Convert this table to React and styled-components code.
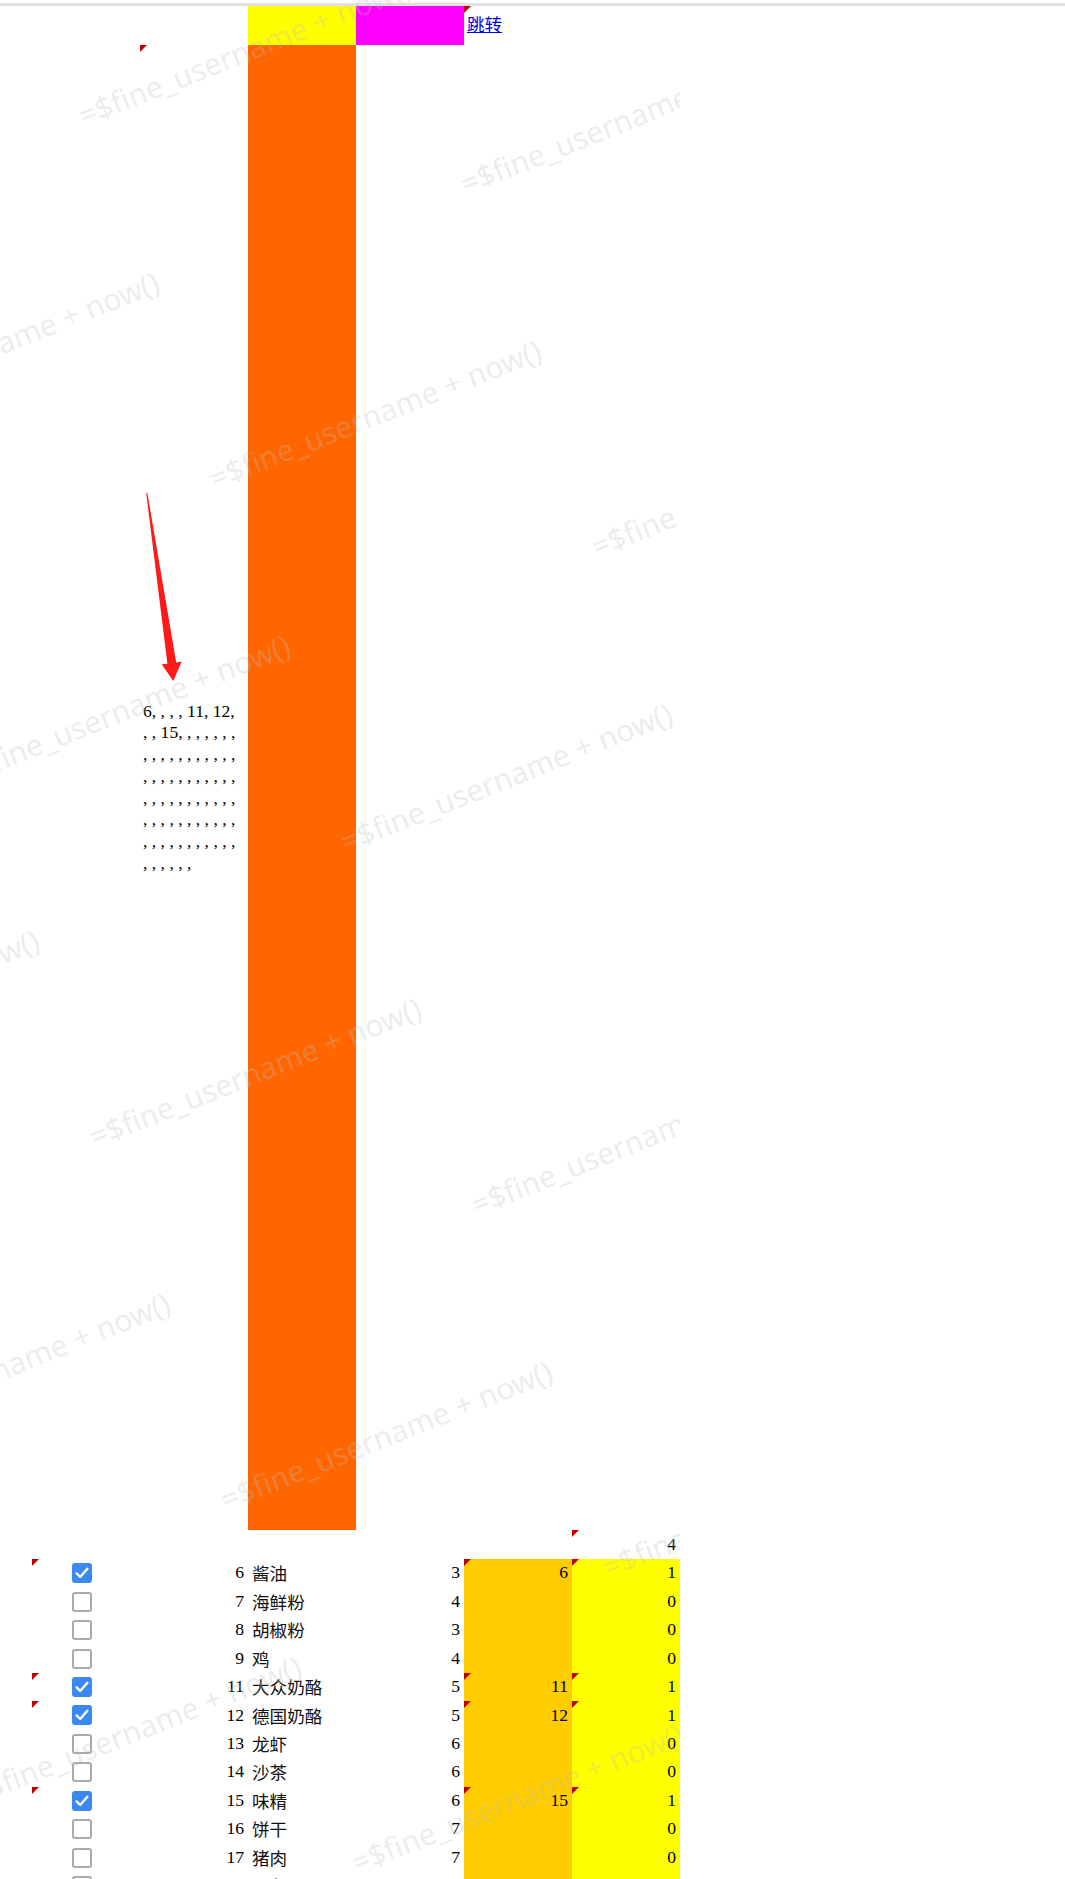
import React from "react";
import styled, { createGlobalStyle } from "styled-components";

const GlobalStyle = createGlobalStyle`
  html, body { margin: 0; padding: 0; background: #fff; }
  body { font-family: "Liberation Serif", "Noto Sans CJK SC", serif; color: #000; }
`;

const Page = styled.div`
  position: relative;
  width: 1065px;
  min-height: 1879px;
  overflow: hidden;
  background: #fff;
`;

const TopRule = styled.div`
  height: 3px;
  margin-top: 3px;
  background: #e1e1e1;
`;

const Sheet = styled.div`
  display: flex;
  flex-direction: column;
  padding-left: 32px;
`;

const Row = styled.div`
  display: grid;
  grid-template-columns: repeat(6, 108px);
  height: ${(p) => p.$h}px;
`;

const Cell = styled.div`
  position: relative;
  display: flex;
  align-items: center;
  justify-content: ${(p) => (p.$align === "right" ? "flex-end" : "flex-start")};
  padding: 0 4px;
  background: ${(p) => p.$bg || "transparent"};
  font-family: "Liberation Serif", "Noto Sans CJK SC", serif;
  font-size: 17.6px;
  line-height: 1;
  white-space: nowrap;
  color: #000;
`;

const LinkCell = styled(Cell)`
  padding: 0 3px;
  align-items: center;
`;

const CheckCell = styled(Cell)`
  padding-left: 40px;
`;

const NoteCell = styled(Cell)`
  padding: 0 8px 0 3px;
  white-space: normal;
`;

const IdList = styled.div`
  font-family: "Liberation Serif", serif;
  font-size: 17.6px;
  line-height: 21.7px;
  word-break: normal;
`;

const Marker = styled.span`
  position: absolute;
  top: 0;
  left: 0;
  width: 0;
  height: 0;
  border-top: 7px solid #c00000;
  border-right: 7px solid transparent;
`;

const JumpLink = styled.a`
  color: #0000ee;
  text-decoration: underline;
  font-family: "Noto Sans CJK SC", sans-serif;
  font-size: 17.6px;
  line-height: 1;
  margin-top: -4px;
`;

const Name = styled.span`
  font-family: "Noto Sans CJK SC", sans-serif;
  font-size: 17.6px;
  color: #111;
`;

const Box = styled.span`
  display: inline-flex;
  align-items: center;
  justify-content: center;
  box-sizing: border-box;
  width: 20px;
  height: 20px;
  border-radius: 3px;
  border: 2px solid ${(p) => (p.$checked ? "#3b88f0" : "#a9a9a9")};
  background: ${(p) => (p.$checked ? "#3b88f0" : "#fff")};
`;

const Overlay = styled.svg`
  position: absolute;
  left: 140px;
  top: 488px;
  overflow: visible;
  pointer-events: none;
`;

const Watermark = styled.div`
  position: absolute;
  left: 0;
  top: 0;
  width: 680px;
  height: 100%;
  overflow: hidden;
  pointer-events: none;
`;

const Mark = styled.span`
  position: absolute;
  font-family: "Noto Sans", "Open Sans", sans-serif;
  font-size: 30px;
  line-height: 1;
  white-space: nowrap;
  color: rgba(190, 190, 190, 0.28);
  transform: rotate(-21.7deg);
  transform-origin: 0 26.6px;
`;

function Checkbox({ checked }) {
  return (
    <Box $checked={checked}>
      {checked && (
        <svg width="16" height="16" viewBox="0 0 16 16">
          <path d="M2.6 8.4 L6.2 12 L13.4 3.8" fill="none" stroke="#fff" strokeWidth="2.4" strokeLinecap="round" strokeLinejoin="round" />
        </svg>
      )}
    </Box>
  );
}

const rows = [
  { id: 6, name: "酱油", n: 3, checked: true },
  { id: 7, name: "海鲜粉", n: 4, checked: false },
  { id: 8, name: "胡椒粉", n: 3, checked: false },
  { id: 9, name: "鸡", n: 4, checked: false },
  { id: 11, name: "大众奶酪", n: 5, checked: true },
  { id: 12, name: "德国奶酪", n: 5, checked: true },
  { id: 13, name: "龙虾", n: 6, checked: false },
  { id: 14, name: "沙茶", n: 6, checked: false },
  { id: 15, name: "味精", n: 6, checked: true },
  { id: 16, name: "饼干", n: 7, checked: false },
  { id: 17, name: "猪肉", n: 7, checked: false },
  { id: 18, name: "墨鱼", n: 8, checked: false },
  { id: 19, name: "糖果", n: 8, checked: false },
];

const selected = [6, "", "", "", 11, 12, "", "", 15];
while (selected.length < 77) selected.push("");
const selectedText = selected.join(", ");

function buildMarks() {
  const out = [];
  for (let i = -2; i <= 7; i++) {
    for (let j = -3; j <= 3; j++) {
      const x = 84 + 131 * i + 382 * j;
      const y = 128 + 363 * i + 68 * j;
      if (x < 680 && x + 350 > 0 && y > -10 && y - 150 < 1879) {
        out.push({ x, y, key: `${i}_${j}` });
      }
    }
  }
  return out;
}
const marks = buildMarks();

export default function App() {
  return (
    <>
      <GlobalStyle />
      <Page>
        <TopRule />
        <Sheet>
          <Row $h={39}>
            <Cell />
            <Cell />
            <Cell $bg="#ffff00" />
            <Cell $bg="#ff00ff" />
            <LinkCell>
              <Marker />
              <JumpLink href="#">跳转</JumpLink>
            </LinkCell>
            <Cell />
          </Row>
          <Row $h={1485}>
            <Cell />
            <NoteCell>
              <Marker />
              <IdList>{selectedText}</IdList>
            </NoteCell>
            <Cell $bg="#ff6600" />
            <Cell />
            <Cell />
            <Cell />
          </Row>
          <Row $h={29}>
            <Cell />
            <Cell />
            <Cell />
            <Cell />
            <Cell />
            <Cell $align="right">
              <Marker />4
            </Cell>
          </Row>
          {rows.map((r) => (
            <Row $h={28.45} key={r.id}>
              <CheckCell>
                {r.checked && <Marker />}
                <Checkbox checked={r.checked} />
              </CheckCell>
              <Cell $align="right">{r.id}</Cell>
              <Cell>
                <Name>{r.name}</Name>
              </Cell>
              <Cell $align="right">{r.n}</Cell>
              <Cell $align="right" $bg="#ffcc00">
                {r.checked && <Marker />}
                {r.checked ? r.id : ""}
              </Cell>
              <Cell $align="right" $bg="#ffff00">
                {r.checked && <Marker />}
                {r.checked ? 1 : 0}
              </Cell>
            </Row>
          ))}
        </Sheet>

        <Overlay width="50" height="200" viewBox="140 488 50 200">
          <polygon
            points="146.2,493 147.4,493 176.2,662.6 181.7,661.4 173.3,681 161.7,664.2 167.4,663.8"
            fill="#ff1a1a"
          />
        </Overlay>

        <Watermark>
          {marks.map((m) => (
            <Mark key={m.key} style={{ left: m.x, top: m.y - 26.6 }}>
              =$fine_username + now()
            </Mark>
          ))}
        </Watermark>
      </Page>
    </>
  );
}
